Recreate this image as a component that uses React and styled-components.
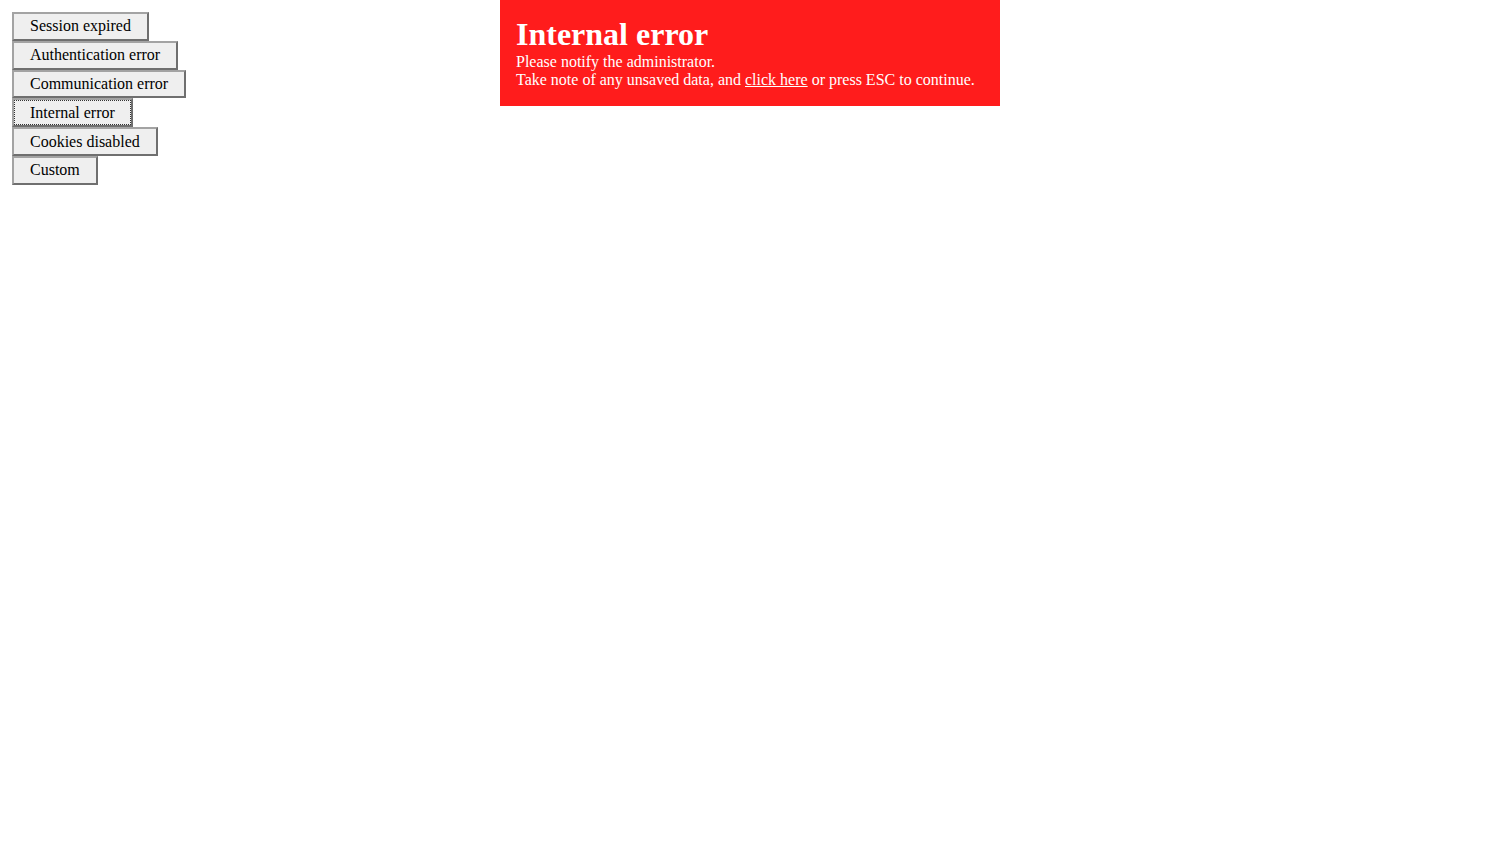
import React from "react";
import styled, { createGlobalStyle } from "styled-components";

const Global = createGlobalStyle`
  html, body { margin: 0; padding: 0; background: #fff; }
  body { font-family: "Liberation Serif", "Times New Roman", serif; font-size: 16px; }
`;

const Page = styled.div`
  padding: 12px;
  display: flex;
  flex-direction: column;
  align-items: flex-start;
`;

const Button = styled.button`
  display: block;
  box-sizing: border-box;
  height: 28.8px;
  margin: 0;
  padding: 0 16px 1px;
  font-family: "Liberation Serif", "Times New Roman", serif;
  font-size: 16px;
  line-height: 23px;
  color: #000;
  background: #efefef;
  border-style: solid;
  border-width: 2px;
  border-color: #a3a3a3 #6f6f6f #6f6f6f #a3a3a3;
  border-radius: 0;
  cursor: default;
  outline: ${(p) => (p.$focused ? "1px dotted #333" : "none")};
  outline-offset: -3px;
`;

const Notification = styled.div`
  position: fixed;
  top: 0;
  left: 50%;
  transform: translateX(-50%);
  width: 500px;
  box-sizing: border-box;
  padding: 16px 16px 17px;
  background: #ff1c1c;
  color: #fff;
  font-family: "Liberation Serif", "Times New Roman", serif;
`;

const Title = styled.h1`
  margin: 0;
  font-size: 32px;
  font-weight: bold;
  line-height: normal;
`;

const Line = styled.p`
  margin: 0;
  font-size: 16px;
  line-height: normal;
`;

const Link = styled.a`
  color: #fff;
  text-decoration: underline;
  cursor: pointer;
`;

const labels = [
  "Session expired",
  "Authentication error",
  "Communication error",
  "Internal error",
  "Cookies disabled",
  "Custom",
];

export default function App() {
  return (
    <>
      <Global />
      <Page>
        {labels.map((l) => (
          <Button key={l} $focused={l === "Internal error"}>
            {l}
          </Button>
        ))}
      </Page>
      <Notification>
        <Title>Internal error</Title>
        <Line>Please notify the administrator.</Line>
        <Line>
          Take note of any unsaved data, and <Link>click here</Link> or press ESC to continue.
        </Line>
      </Notification>
    </>
  );
}
